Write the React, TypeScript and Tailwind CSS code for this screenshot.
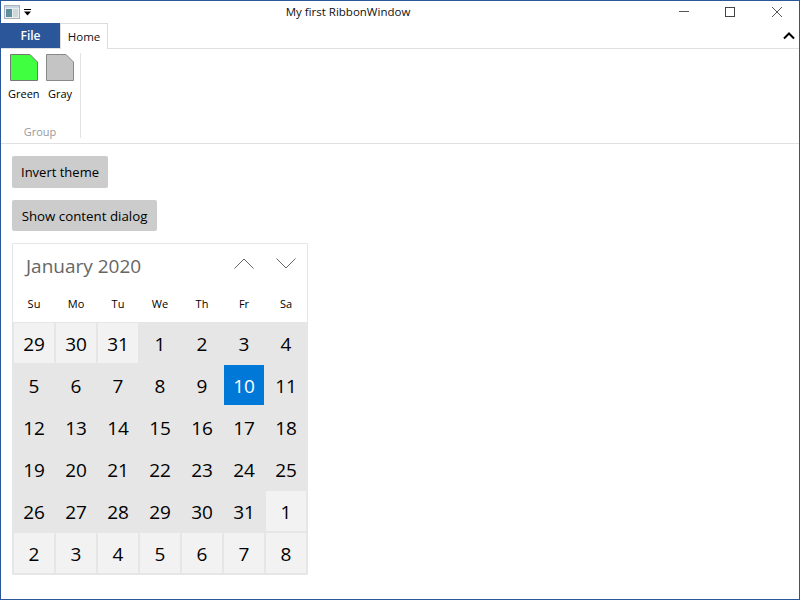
import React from "react";

const font = { fontFamily: '"Open Sans", "Noto Sans", sans-serif' };

const weeks: [string, boolean][][] = [
  [["29", true], ["30", true], ["31", true], ["1", false], ["2", false], ["3", false], ["4", false]],
  [["5", false], ["6", false], ["7", false], ["8", false], ["9", false], ["10", false], ["11", false]],
  [["12", false], ["13", false], ["14", false], ["15", false], ["16", false], ["17", false], ["18", false]],
  [["19", false], ["20", false], ["21", false], ["22", false], ["23", false], ["24", false], ["25", false]],
  [["26", false], ["27", false], ["28", false], ["29", false], ["30", false], ["31", false], ["1", true]],
  [["2", true], ["3", true], ["4", true], ["5", true], ["6", true], ["7", true], ["8", true]],
];

function Swatch({ color, border }: { color: string; border: string }) {
  return (
    <svg width="28" height="27" viewBox="0 0 28 27">
      <path d="M0.5 0.5H20L27.5 8V26.5H0.5Z" fill={color} stroke={border} />
    </svg>
  );
}

export default function App() {
  return (
    <div className="w-[800px] h-[600px] bg-white border border-[#2b579a] flex flex-col overflow-hidden text-black" style={font}>
      <div className="h-[22px] flex items-center relative shrink-0">
        <div className="flex items-center pl-[3px] gap-[4px] w-[100px]">
          <svg width="16" height="14" viewBox="0 0 16 14">
            <rect x="0.5" y="0.5" width="15" height="13" fill="#e8eef0" stroke="#a8b2b8" />
            <rect x="1" y="1" width="14" height="2" fill="#c9d6e4" />
            <rect x="2" y="4" width="6" height="8" fill="#5f8f9c" />
            <rect x="9" y="4" width="5" height="8" fill="#cfd8d8" />
          </svg>
          <svg width="8" height="7" viewBox="0 0 8 7">
            <rect x="0" y="0" width="7" height="1" fill="#000" />
            <path d="M0 2.5H7L3.5 6.5Z" fill="#000" />
          </svg>
        </div>
        <div className="flex-1 text-center text-[11.5px] leading-none text-[#111] pr-[204px] whitespace-nowrap">My first RibbonWindow</div>
        <div className="absolute top-0 right-0 h-[22px] flex items-center">
          <div className="w-[46px] flex justify-center">
            <svg width="12" height="12" viewBox="0 0 12 12"><rect x="1" y="5" width="10" height="1" fill="#555" /></svg>
          </div>
          <div className="w-[46px] flex justify-center">
            <svg width="12" height="12" viewBox="0 0 12 12"><rect x="1.5" y="1.5" width="9" height="9" fill="none" stroke="#444" /></svg>
          </div>
          <div className="w-[46px] flex justify-center pl-[1px]">
            <svg width="12" height="12" viewBox="0 0 12 12"><path d="M1 1L11 11M11 1L1 11" stroke="#555" fill="none" /></svg>
          </div>
        </div>
      </div>

      <div className="h-[26px] shrink-0 flex items-stretch border-b border-[#e0e0e0] relative">
        <div className="w-[59px] h-[25px] bg-[#2b579a] text-white text-[12px] font-semibold flex items-center justify-center">File</div>
        <div className="w-[48px] h-[26px] bg-white border border-b-0 border-[#dcdcdc] text-[11.5px] text-[#111] flex items-center justify-center">Home</div>
        <div className="flex-1 flex justify-end items-center pr-[4px]">
          <svg width="12" height="8" viewBox="0 0 12 8"><path d="M1 6.5L6 1.5L11 6.5" fill="none" stroke="#000" strokeWidth="2" /></svg>
        </div>
      </div>

      <div className="h-[95px] shrink-0 border-b border-[#e0e0e0] flex items-start">
        <div className="w-[80px] h-[85px] mt-[4px] border-r border-[#e2e2e2] flex flex-col items-center">
          <div className="w-full flex pl-[9px] gap-[8px] pt-[1px]">
            <Swatch color="#40ff40" border="#777" />
            <Swatch color="#c4c4c4" border="#888" />
          </div>
          <div className="w-full flex pl-[7px] text-[11px] leading-[14px] mt-[6px] text-[#000]">
            <span className="w-[40px]">Green</span>
            <span>Gray</span>
          </div>
          <div className="mt-auto pr-[1px] text-[11px] leading-[14px] text-[#999] translate-y-[1px]">Group</div>
        </div>
      </div>

      <div className="flex-1 flex flex-col items-start pl-[11px] pt-[12px]">
        <div className="w-[96px] h-[32px] pt-[1px] bg-[#cccccc] rounded-[2px] flex items-center justify-center text-[13px] text-[#000]">Invert theme</div>
        <div className="w-[145px] h-[31px] pt-[2px] mt-[12px] bg-[#cccccc] rounded-[2px] flex items-center justify-center text-[13.3px] text-[#000]">Show content dialog</div>

        <div className="w-[296px] h-[332px] mt-[12px] border border-[#e6e6e6] rounded-[1px] flex flex-col">
          <div className="h-[78px] shrink-0 flex flex-col">
            <div className="h-[44px] flex items-center relative">
              <span className="pl-[13px] text-[19px] leading-none text-[#666]">January 2020</span>
              <div className="ml-auto flex items-center pr-[11px] gap-[22px] pb-[5px]">
                <svg width="20" height="11" viewBox="0 0 20 11"><path d="M0.5 10.5L10 1L19.5 10.5" fill="none" stroke="#666" /></svg>
                <svg width="20" height="11" viewBox="0 0 20 11"><path d="M0.5 0.5L10 10L19.5 0.5" fill="none" stroke="#666" /></svg>
              </div>
            </div>
            <div className="grid grid-cols-[42px_42px_42px_42px_42px_42px_42px] h-[34px] text-[11px] text-[#000] items-center text-center pb-[2px]">
              {["Su", "Mo", "Tu", "We", "Th", "Fr", "Sa"].map((d) => (
                <span key={d}>{d}</span>
              ))}
            </div>
          </div>
          <div className="flex-1 bg-[#e6e6e6] grid grid-cols-[42px_42px_42px_42px_42px_42px_42px] auto-rows-[42px] pl-0">
            {weeks.flat().map(([n, out], i) => (
              <div key={i} className="p-[1px]">
                <div
                  className={
                    "w-full h-[40px] pt-[2px] flex items-center justify-center text-[19px] leading-none " +
                    (i === 12 ? "bg-[#0078d7] text-white" : out ? "bg-[#f2f2f2] text-[#000]" : "text-[#000]")
                  }
                >
                  {n}
                </div>
              </div>
            ))}
          </div>
        </div>
      </div>
    </div>
  );
}
